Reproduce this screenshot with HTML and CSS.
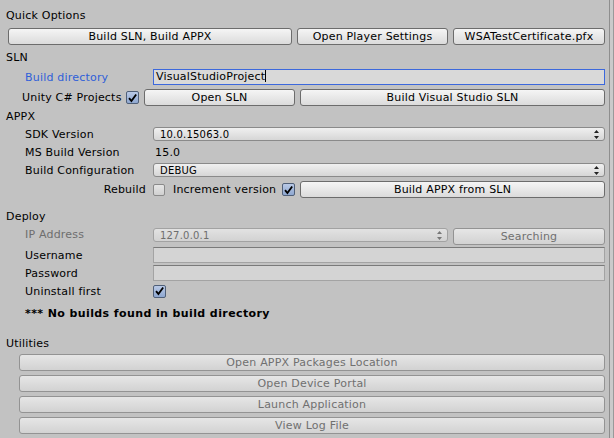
FILE: index.html
```html
<!DOCTYPE html>
<html>
<head>
<meta charset="utf-8">
<title>Build Window</title>
<link rel="stylesheet" href="styles.css">
</head>
<body>
<div class="window">
  <div class="panel">
    <div class="title t-quick">Quick Options</div>
    <div class="row r-quick">
      <button class="btn b-all">Build SLN, Build APPX</button>
      <button class="btn b-player">Open Player Settings</button>
      <button class="btn b-cert">WSATestCertificate.pfx</button>
    </div>

    <div class="title t-sln">SLN</div>
    <div class="frow r-dir">
      <span class="label focus">Build directory</span>
      <div class="textfield active">VisualStudioProject<span class="caret"></span></div>
    </div>
    <div class="row r-unity">
      <span class="label-inline">Unity C# Projects</span>
      <span class="check on u-check"><svg viewBox="0 0 12 12" width="12" height="12"><path d="M2.2 6.2 L4.8 9.2 L10 2.2" fill="none" stroke="#000" stroke-width="2"/></svg></span>
      <button class="btn b-opensln">Open SLN</button>
      <button class="btn b-buildvs">Build Visual Studio SLN</button>
    </div>

    <div class="title t-appx">APPX</div>
    <div class="frow r-sdk">
      <span class="label">SDK Version</span>
      <div class="popup"><span>10.0.15063.0</span><svg class="arrows" viewBox="0 0 5 9" width="5" height="9"><path d="M2.5 0 L5 3 L0 3 Z M0 6 L5 6 L2.5 9 Z" fill="#222"/></svg></div>
    </div>
    <div class="frow r-ms">
      <span class="label">MS Build Version</span>
      <span class="value">15.0</span>
    </div>
    <div class="frow r-conf">
      <span class="label">Build Configuration</span>
      <div class="popup"><span>DEBUG</span><svg class="arrows" viewBox="0 0 5 9" width="5" height="9"><path d="M2.5 0 L5 3 L0 3 Z M0 6 L5 6 L2.5 9 Z" fill="#222"/></svg></div>
    </div>
    <div class="row r-rebuild">
      <span class="rb-label">Rebuild</span>
      <span class="check off rb-check"></span>
      <span class="inc-label">Increment version</span>
      <span class="check on inc-check"><svg viewBox="0 0 12 12" width="12" height="12"><path d="M2.2 6.2 L4.8 9.2 L10 2.2" fill="none" stroke="#000" stroke-width="2"/></svg></span>
      <button class="btn b-appx">Build APPX from SLN</button>
    </div>

    <div class="title t-deploy">Deploy</div>
    <div class="frow r-ip">
      <span class="label dim">IP Address</span>
      <div class="ip-group">
        <div class="popup disabled ip-popup"><span>127.0.0.1</span><svg class="arrows" viewBox="0 0 5 9" width="5" height="9"><path d="M2.5 0 L5 3 L0 3 Z M0 6 L5 6 L2.5 9 Z" fill="#777"/></svg></div>
        <button class="btn disabled b-search">Searching</button>
      </div>
    </div>
    <div class="frow r-user">
      <span class="label">Username</span>
      <div class="textfield plain"></div>
    </div>
    <div class="frow r-pass">
      <span class="label">Password</span>
      <div class="textfield plain"></div>
    </div>
    <div class="frow r-uninstall">
      <span class="label">Uninstall first</span>
      <span class="check on"><svg viewBox="0 0 12 12" width="12" height="12"><path d="M2.2 6.2 L4.8 9.2 L10 2.2" fill="none" stroke="#000" stroke-width="2"/></svg></span>
    </div>
    <div class="warning">*** No builds found in build directory</div>

    <div class="title t-util">Utilities</div>
    <div class="util-list">
      <button class="btn disabled">Open APPX Packages Location</button>
      <button class="btn disabled">Open Device Portal</button>
      <button class="btn disabled">Launch Application</button>
      <button class="btn disabled">View Log File</button>
    </div>
  </div>
  <div class="strip"></div>
</div>
</body>
</html>
```

FILE: styles.css
```css
* { box-sizing: border-box; margin: 0; padding: 0; }
html, body { width: 614px; height: 438px; overflow: hidden; }
body {
  background: #c2c2c2;
  font-family: "DejaVu Sans", Verdana, sans-serif;
  font-size: 11px;
  letter-spacing: 0.2px;
  color: #000;
}
.window { display: flex; height: 438px; }
.panel {
  width: 609px;
  padding-right: 4px;
  display: flex;
  flex-direction: column;
}
.strip {
  flex: 1;
  border-left: 1px solid #8e8e8e;
  border-right: 1px solid #999;
  background: #cacaca;
}

.title { height: 18px; padding-top: 2px; line-height: 16px; padding-left: 6px; }
.t-quick { margin-top: 6px; }
.t-sln { margin-top: 3px; }
.t-appx { margin-top: 1px; }
.t-deploy { margin-top: 9px; }
.t-util { margin-top: 12px; }

.row { display: flex; align-items: center; }
.frow { display: grid; grid-template-columns: 153px 1fr; align-items: center; }
.label { padding-left: 25px; white-space: nowrap; }
.label.focus { color: #2f5fd9; }
.label.dim { color: #6e6e6e; }
.value { padding-left: 2px; }

.btn {
  font: inherit;
  letter-spacing: inherit;
  height: 17px;
  line-height: 15px;
  border: 1px solid #6c6c6c;
  border-radius: 3px;
  background: linear-gradient(#f5f5f5, #dbdbdb);
  color: #000;
  text-align: center;
  white-space: nowrap;
}
.btn.disabled {
  border-color: #939393;
  background: linear-gradient(#e6e6e6, #d2d2d2);
  color: #707070;
}

.r-quick { margin-top: 4px; padding-left: 8px; gap: 5px; }
.b-all { width: 284px; }
.b-player { width: 151px; }
.b-cert { flex: 1; }

.textfield {
  height: 16px;
  line-height: 14px;
  padding-left: 2px;
  border: 1px solid #9c9c9c;
  background: #d4d4d4;
  white-space: nowrap;
}
.textfield.active { border-color: #3c68dc; background: #d9d9d9; }
.textfield.plain { border-color: #a3a3a3; border-top-color: #7a7a7a; }
.caret { display: inline-block; width: 1px; height: 12px; background: #000; vertical-align: -2px; }
.r-dir { margin-top: 3px; height: 16px; }

.r-unity { margin-top: 4px; padding-left: 22px; height: 17px; }
.label-inline { width: 104px; white-space: nowrap; }
.b-opensln { width: 151px; margin-left: 5px; }
.b-buildvs { flex: 1; margin-left: 5px; }

.check {
  width: 13px;
  height: 13px;
  border: 1px solid #6b6b6b;
  border-radius: 2px;
  display: inline-flex;
  align-items: center;
  justify-content: center;
  flex: none;
}
.check.on { background: linear-gradient(#b9c9e6, #8ea7d0); border-color: #4f5f78; }
.check.off { background: linear-gradient(#e6e6e6, #d0d0d0); border-color: #8a8a8a; width: 12px; height: 12px; }

.r-sdk, .r-ms, .r-conf { height: 18px; }
.popup {
  height: 14px;
  border: 1px solid #8a8a8a;
  border-radius: 3px;
  background: linear-gradient(#f0f0f0, #d6d6d6);
  display: flex;
  align-items: center;
  justify-content: space-between;
  padding: 0 5px 0 6px;
  font-size: 10px;
  white-space: nowrap;
}
.popup .arrows { flex: none; }
.popup.disabled { border-color: #a2a2a2; background: linear-gradient(#e2e2e2, #d2d2d2); color: #6e6e6e; }

.r-rebuild { margin-top: 2px; height: 17px; }
.rb-label { width: 146px; text-align: right; }
.rb-check { margin-left: 7px; }
.inc-label { width: 104px; margin-left: 8px; white-space: nowrap; }
.inc-check { margin-left: 5px; }
.b-appx { flex: 1; margin-left: 5px; }

.r-ip { margin-top: 3px; height: 17px; align-items: start; }
.ip-group { display: flex; gap: 5px; align-items: flex-start; }
.ip-popup { width: 295px; }
.b-search { flex: 1; }
.r-user { margin-top: 2px; height: 16px; }
.r-pass { margin-top: 2px; height: 16px; }
.r-uninstall { margin-top: 1px; height: 18px; }

.warning { margin-top: 4px; height: 18px; padding-top: 2px; line-height: 16px; padding-left: 25px; font-weight: bold; letter-spacing: 0.4px; }

.util-list { margin-top: 2px; padding-left: 19px; display: flex; flex-direction: column; gap: 4px; }
```
